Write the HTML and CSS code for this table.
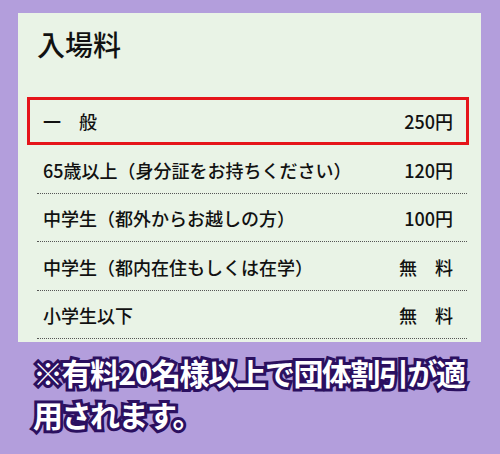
FILE: index.html
```html
<!DOCTYPE html>
<html lang="ja">
<head>
<meta charset="utf-8">
<link rel="stylesheet" href="styles.css">
</head>
<body>
<div class="page">
  <section class="panel">
    <h2 class="title">入場料</h2>
    <ul class="fees">
      <li class="row row-hl"><span class="label">一　般</span><span class="price">250円</span></li>
      <li class="row"><span class="label">65歳以上（身分証をお持ちください）</span><span class="price">120円</span></li>
      <li class="row"><span class="label">中学生（都外からお越しの方）</span><span class="price">100円</span></li>
      <li class="row"><span class="label">中学生（都内在住もしくは在学）</span><span class="price">無　料</span></li>
      <li class="row"><span class="label">小学生以下</span><span class="price">無　料</span></li>
    </ul>
  </section>
  <p class="note">※有料20名様以上で団体割引が適<br>用されます。</p>
</div>
</body>
</html>
```

FILE: styles.css
```css
html, body {
  margin: 0;
  padding: 0;
  background: #b39edc;
}
.page {
  width: 500px;
  height: 454px;
  padding-top: 13px;
  box-sizing: border-box;
  font-family: "Noto Sans CJK JP", "Noto Sans", sans-serif;
}
.panel {
  margin-left: 18px;
  width: 463px;
  height: 329px;
  background: #e9f3e6;
  box-sizing: border-box;
  padding: 17px 14px 0 19px;
}
.title {
  margin: 0;
  font-size: 28px;
  line-height: 28px;
  font-weight: 500;
  color: #111;
}
.fees {
  list-style: none;
  margin: 39px 0 0 0;
  padding: 0;
}
.row {
  display: flex;
  justify-content: space-between;
  align-items: center;
  height: 48.5px;
  box-sizing: border-box;
  padding: 2px 14px 0 6px;
  border-bottom: 1px dotted #555;
  font-size: 18px;
  font-weight: 500;
  color: #111;
}
.row-hl {
  height: 48px;
  margin: 0 -2px 0 -10px;
  padding: 0 13px 0 13px;
  border: 3px solid #e5141a;
}
.price {
  white-space: pre;
}
.note {
  margin: 9px 0 0 33px;
  font-size: 30px;
  line-height: 42px;
  font-weight: 700;
  color: #ffffff;
  -webkit-text-stroke: 6px #2b1060;
  paint-order: stroke fill;
  letter-spacing: -1.5px;
}
```
